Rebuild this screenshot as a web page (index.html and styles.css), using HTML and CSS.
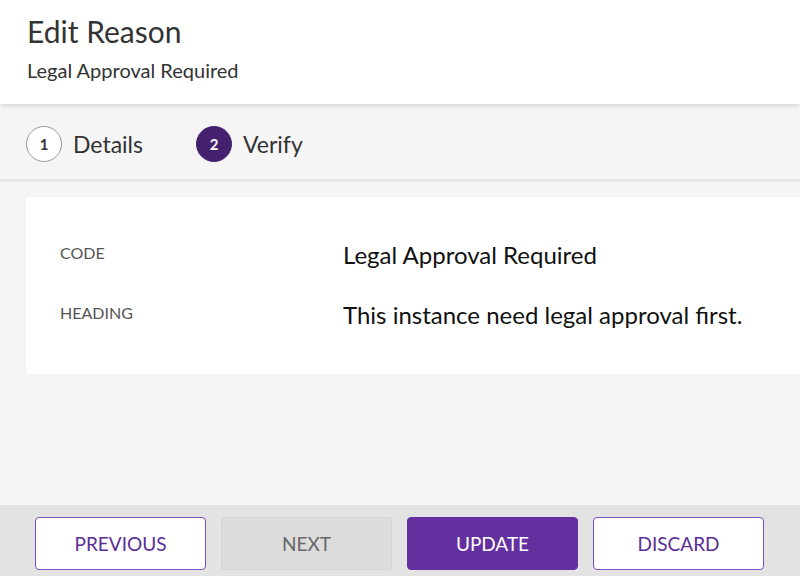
FILE: index.html
```html
<!DOCTYPE html>
<html>
<head>
<meta charset="utf-8">
<link rel="stylesheet" href="styles.css">
</head>
<body>
<div class="page">
  <header class="header">
    <h1 class="title">Edit Reason</h1>
    <div class="subtitle">Legal Approval Required</div>
  </header>
  <nav class="stepper">
    <div class="step">
      <span class="circle">1</span>
      <span class="step-label">Details</span>
    </div>
    <div class="step">
      <span class="circle active">2</span>
      <span class="step-label">Verify</span>
    </div>
  </nav>
  <main class="content">
    <section class="card">
      <div class="row">
        <div class="label">CODE</div>
        <div class="value">Legal Approval Required</div>
      </div>
      <div class="row">
        <div class="label">HEADING</div>
        <div class="value">This instance need legal approval first.</div>
      </div>
    </section>
  </main>
  <footer class="footer">
    <button class="btn outline">PREVIOUS</button>
    <button class="btn disabled">NEXT</button>
    <button class="btn primary">UPDATE</button>
    <button class="btn outline">DISCARD</button>
  </footer>
</div>
</body>
</html>
```

FILE: styles.css
```css
* { box-sizing: border-box; }
html, body { margin: 0; padding: 0; }
body {
  font-family: Lato, "Open Sans", sans-serif;
  width: 800px;
  height: 576px;
  overflow: hidden;
  background: #f5f5f5;
  color: #333;
}
.page {
  display: flex;
  flex-direction: column;
  height: 576px;
}
.header {
  background: #fff;
  height: 104px;
  padding: 13px 27px 0;
  box-shadow: 0 2px 5px rgba(0,0,0,0.12);
  position: relative;
  z-index: 1;
}
.title {
  margin: 0;
  font-weight: 400;
  font-size: 30px;
  line-height: 36px;
  color: #333;
}
.subtitle {
  margin-top: 9px;
  font-size: 20px;
  line-height: 24px;
  color: #333;
}
.stepper {
  height: 78px;
  display: flex;
  align-items: center;
  gap: 53px;
  padding: 5px 26px 0;
  border-bottom: 3px solid #e6e6e6;
  background: #f5f5f5;
}
.step {
  display: flex;
  align-items: center;
  gap: 11px;
}
.circle {
  width: 36px;
  height: 36px;
  border-radius: 50%;
  border: 1px solid #999;
  background: #fff;
  display: flex;
  align-items: center;
  justify-content: center;
  font-size: 15px;
  font-weight: 700;
  color: #333;
}
.circle.active {
  background: #45206f;
  border-color: #45206f;
  color: #fff;
}
.step-label {
  font-size: 23px;
  color: #333;
}
.content {
  flex: 1;
  padding: 15px 0 0 26px;
}
.card {
  background: #fff;
  height: 177px;
  padding: 45px 0 0 34px;
  display: flex;
  flex-direction: column;
  gap: 36px;
}
.row {
  display: flex;
  align-items: center;
  height: 24px;
}
.label {
  width: 283px;
  font-size: 16px;
  color: #555;
  margin-top: -4px;
}
.value {
  font-size: 24px;
  color: #111;
}
.footer {
  height: 71px;
  background: #e3e3e3;
  display: flex;
  align-items: flex-start;
  padding: 12px 0 0 35px;
  gap: 15px;
}
.btn {
  width: 171px;
  height: 53px;
  border-radius: 4px;
  font-family: Lato, "Open Sans", sans-serif;
  font-size: 19px;
  border: 1px solid #7a4fb8;
  background: #fff;
  color: #5b2d97;
  padding: 0;
}
.btn.disabled {
  background: #dcdcdc;
  border-color: #d4d4d4;
  color: #666;
}
.btn.primary {
  background: #6430a0;
  border-color: #6430a0;
  color: #fff;
}
```
